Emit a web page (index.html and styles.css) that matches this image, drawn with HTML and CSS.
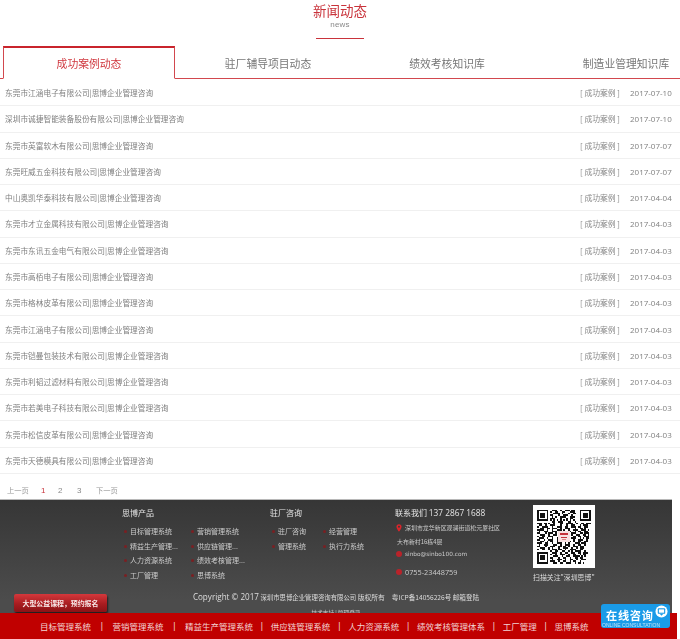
FILE: index.html
```html
<!DOCTYPE html>
<html lang="zh-CN">
<head>
<meta charset="utf-8">
<title>新闻动态</title>
<link rel="stylesheet" href="styles.css">
</head>
<body>
<div class="page">
  <header class="heading">
    <h2 class="heading-title">新闻动态</h2>
    <p class="heading-sub">news</p>
    <span class="heading-rule"></span>
  </header>

  <nav class="tabs">
    <a class="tab tab-active">成功案例动态</a>
    <a class="tab">驻厂辅导项目动态</a>
    <a class="tab">绩效考核知识库</a>
    <a class="tab">制造业管理知识库</a>
  </nav>

  <ul class="news">
    <li class="news-row"><span class="news-title">东莞市江涵电子有限公司|思博企业管理咨询</span><span class="news-tag">[ 成功案例 ]</span><span class="news-date">2017-07-10</span></li>
    <li class="news-row"><span class="news-title">深圳市诚捷智能装备股份有限公司|思博企业管理咨询</span><span class="news-tag">[ 成功案例 ]</span><span class="news-date">2017-07-10</span></li>
    <li class="news-row"><span class="news-title">东莞市英富软木有限公司|思博企业管理咨询</span><span class="news-tag">[ 成功案例 ]</span><span class="news-date">2017-07-07</span></li>
    <li class="news-row"><span class="news-title">东莞旺威五金科技有限公司|思博企业管理咨询</span><span class="news-tag">[ 成功案例 ]</span><span class="news-date">2017-07-07</span></li>
    <li class="news-row"><span class="news-title">中山奥凯华泰科技有限公司|思博企业管理咨询</span><span class="news-tag">[ 成功案例 ]</span><span class="news-date">2017-04-04</span></li>
    <li class="news-row"><span class="news-title">东莞市才立金属科技有限公司|思博企业管理咨询</span><span class="news-tag">[ 成功案例 ]</span><span class="news-date">2017-04-03</span></li>
    <li class="news-row"><span class="news-title">东莞市东讯五金电气有限公司|思博企业管理咨询</span><span class="news-tag">[ 成功案例 ]</span><span class="news-date">2017-04-03</span></li>
    <li class="news-row"><span class="news-title">东莞市高栢电子有限公司|思博企业管理咨询</span><span class="news-tag">[ 成功案例 ]</span><span class="news-date">2017-04-03</span></li>
    <li class="news-row"><span class="news-title">东莞市格林皮革有限公司|思博企业管理咨询</span><span class="news-tag">[ 成功案例 ]</span><span class="news-date">2017-04-03</span></li>
    <li class="news-row"><span class="news-title">东莞市江涵电子有限公司|思博企业管理咨询</span><span class="news-tag">[ 成功案例 ]</span><span class="news-date">2017-04-03</span></li>
    <li class="news-row"><span class="news-title">东莞市铠曼包装技术有限公司|思博企业管理咨询</span><span class="news-tag">[ 成功案例 ]</span><span class="news-date">2017-04-03</span></li>
    <li class="news-row"><span class="news-title">东莞市利韬过滤材料有限公司|思博企业管理咨询</span><span class="news-tag">[ 成功案例 ]</span><span class="news-date">2017-04-03</span></li>
    <li class="news-row"><span class="news-title">东莞市若美电子科技有限公司|思博企业管理咨询</span><span class="news-tag">[ 成功案例 ]</span><span class="news-date">2017-04-03</span></li>
    <li class="news-row"><span class="news-title">东莞市松信皮革有限公司|思博企业管理咨询</span><span class="news-tag">[ 成功案例 ]</span><span class="news-date">2017-04-03</span></li>
    <li class="news-row"><span class="news-title">东莞市天德模具有限公司|思博企业管理咨询</span><span class="news-tag">[ 成功案例 ]</span><span class="news-date">2017-04-03</span></li>
  </ul>

  <div class="pager">
    <a class="pager-nav">上一页</a>
    <a class="pager-num pager-current">1</a>
    <a class="pager-num">2</a>
    <a class="pager-num">3</a>
    <a class="pager-nav">下一页</a>
  </div>

  <footer class="footer">
    <div class="footer-main">
      <section class="fcol fcol-products">
        <h3 class="fcol-title">思博产品</h3>
        <ul class="flinks flinks-products">
          <li>目标管理系统</li><li>营销管理系统</li>
          <li>精益生产管理...</li><li>供应链管理...</li>
          <li>人力资源系统</li><li>绩效考核管理...</li>
          <li>工厂管理</li><li>思博系统</li>
        </ul>
      </section>
      <section class="fcol fcol-consult">
        <h3 class="fcol-title">驻厂咨询</h3>
        <ul class="flinks flinks-consult">
          <li>驻厂咨询</li><li>经营管理</li>
          <li>管理系统</li><li>执行力系统</li>
        </ul>
      </section>
      <section class="fcol fcol-contact">
        <h3 class="fcol-title">联系我们 <span class="contact-tel">137 2867 1688</span></h3>
        <p class="contact-line contact-address">
          <svg class="contact-icon" viewBox="0 0 8 10"><path d="M4 0a3.4 3.4 0 0 0-3.4 3.4C.6 6 4 10 4 10s3.4-4 3.4-6.600A3.4 3.4 0 0 0 4 0zm0 4.800a1.400 1.400 0 1 1 0-2.800 1.400 1.400 0 0 1 0 2.800z" fill="#d9252b"/></svg>
          <span>深圳市龙华新区观澜街道松元厦社区</span>
        </p>
        <p class="contact-second">大布新村16栋4层</p>
        <p class="contact-line contact-mail"><i class="contact-dot"></i><span>sinbo@sinbo100.com</span></p>
        <p class="contact-line contact-phone"><i class="contact-dot"></i><span>0755-23448759</span></p>
      </section>
      <section class="fcol fcol-qr">
        <div class="qr">
          <svg class="qr-code" viewBox="0 0 33 33" shape-rendering="crispEdges">
            <path fill="none" stroke="#111" stroke-width="1" d="M0 .5h7M0 1.500h1M6 1.500h1M0 2.500h1M2 2.500h3M6 2.500h1M0 3.500h1M2 3.500h3M6 3.500h1M0 4.500h1M2 4.500h3M6 4.500h1M0 5.500h1M6 5.500h1M0 6.500h7
            M26 .5h7M26 1.500h1M32 1.500h1M26 2.500h1M28 2.500h3M32 2.500h1M26 3.500h1M28 3.500h3M32 3.500h1M26 4.500h1M28 4.500h3M32 4.500h1M26 5.500h1M32 5.500h1M26 6.500h7
            M0 26.500h7M0 27.500h1M6 27.500h1M0 28.500h1M2 28.500h3M6 28.500h1M0 29.500h1M2 29.500h3M6 29.500h1M0 30.500h1M2 30.500h3M6 30.500h1M0 31.500h1M6 31.500h1M0 32.500h7
            M9 .5h3m2 0h1m2 0h3m1 0h2
            M8 1.500h1m2 0h2m2 0h2m3 0h3
            M10 2.500h4m1 0h1m3 0h1m2 0h2
            M8 3.500h2m3 0h1m2 0h3m2 0h1
            M9 4.500h1m1 0h1m2 0h4m2 0h3
            M8 5.500h3m3 0h1m3 0h1m1 0h2
            M8 6.500h1m1 0h1m1 0h1m1 0h1m1 0h1m1 0h1m1 0h1m1 0h1
            M9 7.500h2m2 0h3m3 0h2m2 0h1
            M0 8.500h3m1 0h2m1 0h1m2 0h1m3 0h2m2 0h4m2 0h1m2 0h2m1 0h3
            M1 9.500h2m2 0h1m2 0h3m3 0h1m3 0h1m2 0h2m3 0h1m1 0h3
            M0 10.500h1m2 0h4m2 0h1m2 0h3m2 0h2m2 0h3m1 0h2m2 0h2
            M2 11.500h2m2 0h2m1 0h3m2 0h1m2 0h3m3 0h1m2 0h2m1 0h1
            M0 12.500h4m2 0h1m2 0h1m2 0h3m1 0h1m2 0h1m2 0h3m2 0h3m1 0h1
            M1 13.500h1m2 0h3m2 0h3m8 0h1m2 0h1m1 0h2m2 0h2
            M0 14.500h2m3 0h1m1 0h3m1 0h1m9 0h3m2 0h2m1 0h3
            M2 15.500h3m2 0h1m2 0h2m9 0h1m2 0h2m2 0h2m1 0h1
            M0 16.500h1m2 0h2m2 0h3m3 0h1m8 0h2m1 0h2m2 0h3
            M1 17.500h3m2 0h1m2 0h1m2 0h1m8 0h3m2 0h1m1 0h1m1 0h2
            M0 18.500h2m2 0h1m2 0h3m2 0h1m9 0h1m2 0h3m2 0h1
            M2 19.500h2m2 0h1m1 0h2m2 0h2m1 0h1m2 0h3m1 0h1m2 0h2m2 0h2
            M0 20.500h3m2 0h2m2 0h1m2 0h3m2 0h1m1 0h1m3 0h3m1 0h3
            M1 21.500h1m2 0h3m3 0h2m2 0h1m2 0h3m2 0h1m2 0h2m2 0h1
            M0 22.500h2m3 0h1m2 0h3m2 0h2m1 0h2m1 0h1m2 0h3m1 0h3
            M2 23.500h3m2 0h1m1 0h1m3 0h1m2 0h3m2 0h1m2 0h1m1 0h3
            M0 24.500h1m2 0h2m2 0h1m1 0h3m1 0h2m2 0h1m2 0h4m2 0h2
            M8 25.500h1m2 0h2m2 0h2m2 0h1m1 0h1m1 0h4m2 0h1
            M9 26.500h3m2 0h1m2 0h2m2 0h2m2 0h2m1 0h3
            M8 27.500h1m2 0h1m2 0h3m2 0h1m2 0h2m2 0h1m1 0h2
            M10 28.500h3m2 0h1m2 0h2m2 0h4m1 0h1m1 0h1
            M8 29.500h2m3 0h1m2 0h2m2 0h1m2 0h2m1 0h2
            M9 30.500h1m2 0h3m2 0h1m2 0h2m2 0h1m2 0h3
            M8 31.500h3m2 0h1m2 0h2m2 0h1m1 0h2m2 0h1
            M10 32.500h2m2 0h2m2 0h3m2 0h1m1 0h2m1 0h1"/>
            <rect x="13" y="13" width="7" height="7" fill="#f6dfe0"/>
            <rect x="14" y="14.500" width="5" height="1" fill="#c4323a"/>
            <rect x="14.500" y="16.500" width="4" height="1" fill="#c4323a"/>
            <rect x="15" y="18" width="3" height=".6" fill="#d88"/>
          </svg>
        </div>
        <p class="qr-caption">扫描关注"深圳思博"</p>
      </section>
    </div>
    <p class="copyright"><span class="copyright-en">Copyright © 2017</span> <span>深圳市思博企业管理咨询有限公司</span> <span class="copyright-rights">版权所有</span><span class="copyright-icp">粤ICP备14056226号 邮箱登陆</span></p>
    <p class="support">技术支持 | 管理登录</p>
  </footer>

  <a class="promo">大型公益课程，预约报名</a>

  <div class="bottom-bar">
    <a>目标管理系统</a><i class="sep-wide">|</i>
    <a>营销管理系统</a><i class="sep-wide">|</i>
    <a>精益生产管理系统</a><i>|</i>
    <a>供应链管理系统</a><i>|</i>
    <a>人力资源系统</a><i>|</i>
    <a>绩效考核管理体系</a><i>|</i>
    <a>工厂管理</a><i>|</i>
    <a>思博系统</a>
  </div>

  <a class="online">
    <span class="online-cn">在线咨询</span>
    <span class="online-en">ONLINE CONSULTATION</span>
    <svg class="online-icon" viewBox="0 0 14 14"><circle cx="7" cy="7" r="6.500" fill="#fff"/><rect x="3" y="3.500" width="8" height="6" rx="1" fill="#1a9be8"/><rect x="4.200" y="4.700" width="5.600" height="3.600" fill="#fff"/><path d="M5 9.500h4L7 11.500z" fill="#1a9be8"/></svg>
  </a>
</div>
</body>
</html>
```

FILE: styles.css
```css
* { box-sizing: border-box; }
html, body { margin: 0; padding: 0; height: 100%; overflow: hidden; background: #fff; }
body { font-family: "Noto Sans CJK SC", "Liberation Sans", sans-serif; color: #777; }
h2, h3, p, ul { margin: 0; padding: 0; font-weight: 400; }
ul { list-style: none; }

.page { width: 680px; height: 639px; overflow: hidden; filter: blur(.35px); }

.heading { height: 46px; display: flex; flex-direction: column; align-items: center; }
.heading-title { font-size: 13.500px; line-height: 20px; color: #c9333b; }
.heading-sub { font-family: "Liberation Sans", sans-serif; font-size: 8px; line-height: 10px; color: #888; letter-spacing: .2px; }
.heading-rule { width: 48px; height: 1.500px; background: #c9333b; margin-top: 7.500px; }

.tabs { display: flex; height: 33px; width: 680px; border-bottom: 1px solid #d2484e; padding-left: 3px; }
.tab { flex: none; width: 172px; margin-right: 7px; height: 33px; font-size: 10.800px; line-height: 34px; text-align: center; color: #777; }
.tab-active { color: #d0383f; background: #fff; border: 1px solid #d2484e; border-top: 2px solid #c9242c; border-bottom: 1px solid #fff; line-height: 31px; }

.news { margin-top: 1px; }
.news-row { display: flex; align-items: center; height: 26.280px; padding: 0 8px 0 5px; border-bottom: 1px solid #f0f0f0; font-size: 7.700px; color: #808080; }
.news-title { flex: 1; }
.news-tag { width: 50px; font-size: 7.800px; color: #888; white-space: nowrap; }
.news-date { font-family: "Open Sans", "Liberation Sans", sans-serif; width: 42px; font-size: 8px; color: #808080; white-space: nowrap; }

.pager { display: flex; align-items: center; height: 25px; padding: 8px 0 0 7px; font-size: 7.300px; color: #999; white-space: nowrap; }
.pager-nav { width: 22px; }
.pager-num { font-family: "Liberation Sans", sans-serif; font-size: 8px; color: #888; width: 19px; }
.pager-nav + .pager-num { margin-left: 12px; width: 17px; }
.pager-current { color: #c9333b; }

.footer { width: 672px; height: 140px; border-top: 1px solid #b8b8b8; background: linear-gradient(#363636, #4c4c4c 100px); color: #ddd; }
.footer-main { display: flex; padding-left: 122px; height: 92px; }
.fcol-title { font-size: 8px; line-height: 12px; color: #e4e4e4; margin-top: 7px; white-space: nowrap; }
.fcol-products { width: 148px; }
.fcol-consult { width: 125px; }
.fcol-contact { width: 138px; }
.contact-tel { font-family: "Open Sans", "Liberation Sans", sans-serif; font-size: 8.300px; }

.flinks { display: grid; margin-top: 5.500px; font-size: 7px; line-height: 14.500px; color: #ccc; }
.flinks li { position: relative; white-space: nowrap; }
.flinks li::before { content: ""; position: absolute; left: -6px; top: 6px; width: 3px; height: 3px; border-radius: 50%; background: #7b1f22; }
.flinks-products { grid-template-columns: 67px 60px; padding-left: 8px; }
.flinks-consult { grid-template-columns: 51px 60px; padding-left: 8px; }

.contact-line { display: flex; align-items: center; white-space: nowrap; }
.contact-line span { margin-left: 3px; }
.contact-icon { width: 6px; height: 8px; margin-left: 1px; }
.contact-dot { width: 6px; height: 6px; margin-left: 1px; border-radius: 50%; background: #b9232a; }
.contact-address { margin-top: 3px; font-size: 5.950px; line-height: 12px; color: #ccc; }
.contact-second { font-size: 5.950px; line-height: 12px; margin-top: 2px; margin-left: 2px; color: #ccc; }
.contact-mail { font-family: "DejaVu Sans", sans-serif; font-size: 5.800px; line-height: 12px; margin-top: 0; color: #ccc; }
.contact-phone { font-family: "Open Sans", "Liberation Sans", sans-serif; font-size: 7.300px; line-height: 12px; margin-top: 6px; color: #ccc; }

.qr { width: 62px; height: 63px; background: #fff; margin-top: 5px; padding: 4px; }
.qr-code { display: block; width: 54px; height: 55px; }
.qr-caption { font-size: 6.900px; line-height: 10px; margin-top: 4px; color: #ddd; white-space: nowrap; }

.copyright { font-size: 6.400px; line-height: 12px; text-align: center; color: #ddd; margin-top: -1px; white-space: nowrap; }
.copyright-en { font-family: "Open Sans", "Liberation Sans", sans-serif; font-size: 8.100px; }
.copyright-rights { font-size: 6.800px; }
.copyright-icp { font-size: 6.600px; margin-left: 7px; }
.support { font-size: 5.600px; line-height: 10px; text-align: center; margin-top: 4px; color: #ccc; }

.promo { position: fixed; left: 14px; top: 594px; width: 93px; height: 18px; border-radius: 2px; background: linear-gradient(#d4383c, #a81c20 55%, #8b1216); box-shadow: 1px 2px 2px rgba(0,0,0,.6); color: #f8e8e8; font-size: 6.900px; font-weight: 700; line-height: 18px; text-align: center; white-space: nowrap; }

.bottom-bar { position: fixed; left: 0; top: 613px; width: 677px; height: 26px; background: #c00000; color: #f2d4d4; display: flex; align-items: center; padding-left: 40px; font-size: 8.500px; white-space: nowrap; }
.bottom-bar i { font-style: normal; width: 17.800px; text-align: center; font-family: "Liberation Sans", sans-serif; }
.bottom-bar .sep-wide { width: 21.500px; }

.online { position: fixed; left: 601px; top: 604px; width: 69px; height: 24px; border-radius: 3px; background: #1a9be8; color: #fff; }
.online-cn { position: absolute; left: 5px; top: 4px; font-size: 11.200px; line-height: 14px; font-weight: 700; letter-spacing: .7px; white-space: nowrap; }
.online-en { position: absolute; left: 1px; top: 18px; font-family: "Liberation Sans", sans-serif; font-size: 5px; line-height: 6px; white-space: nowrap; color: #bfe3f8; }
.online-icon { position: absolute; left: 54px; top: 1px; width: 13px; height: 13px; }
```
